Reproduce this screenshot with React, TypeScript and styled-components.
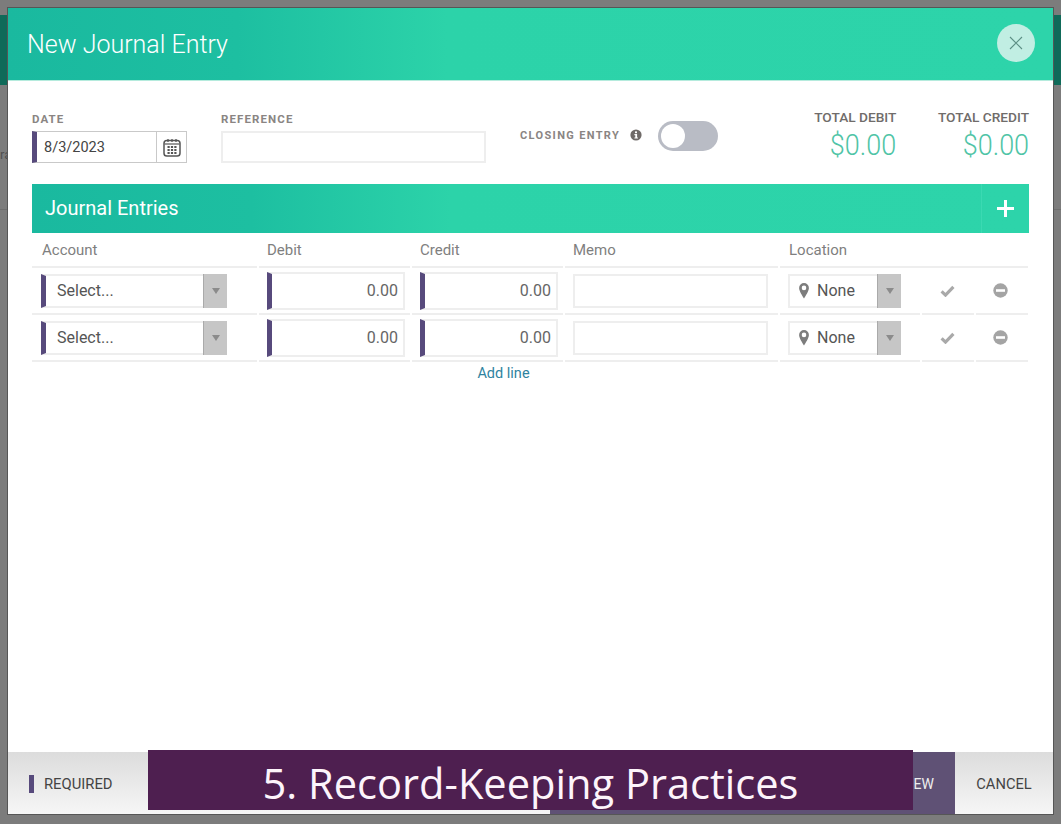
import React from "react";
import styled, { createGlobalStyle } from "styled-components";

const Global = createGlobalStyle`
  html, body { margin: 0; padding: 0; }
  body { width: 1061px; height: 824px; overflow: hidden; background: #7c7c7c; font-family: Roboto, "Liberation Sans", sans-serif; }
  * { box-sizing: border-box; }
`;

const Page = styled.div`
  position: relative;
  width: 1061px;
  height: 824px;
  background: #7c7c7c;
  overflow: hidden;
`;
const BehindBar = styled.div`
  height: 70px;
  margin-top: 15px;
  background: #0f6a59;
`;
const BehindRow = styled.div`
  margin-top: 60px;
  height: 65px;
  padding-top: 2px;
  border-bottom: 1px solid #6e6e6e;
  font-size: 13px;
  line-height: 16px;
  color: #4f4f4f;
`;
const Modal = styled.div`
  position: absolute;
  left: 7px;
  top: 7px;
  width: 1047px;
  height: 808px;
  display: flex;
  flex-direction: column;
  background: #fff;
  border: 1px solid #565656;
`;
const ModalHeader = styled.header`
  flex: none;
  height: 73px;
  display: flex;
  align-items: center;
  justify-content: space-between;
  padding: 0 18px 2px 19px;
  background: linear-gradient(90deg, #1ab99f 0%, #1dbfa1 22%, #2cd3a9 42%, #2dd4aa 100%);
  border-bottom: 1px solid #b5ebdd;
`;
const Title = styled.h1`
  margin: 2px 0 0;
  font-size: 25px;
  font-weight: 300;
  color: #fff;
`;
const CloseButton = styled.button`
  width: 38px;
  height: 38px;
  padding: 0;
  border: 0;
  border-radius: 50%;
  background: #c1eee3;
  display: flex;
  align-items: center;
  justify-content: center;
`;
const Body = styled.main`
  flex: 1;
  padding: 28px 24px 0;
`;
const TopRow = styled.div`
  display: flex;
  align-items: flex-start;
  height: 75px;
`;
const Field = styled.div<{ $w: number }>`
  width: ${(p) => p.$w}px;
  flex: none;
`;
const Label = styled.div`
  font-size: 11.5px;
  line-height: 16px;
  height: 16px;
  font-weight: 700;
  letter-spacing: 1.1px;
  color: #8a8583;
  margin-top: 2px;
`;
const DateBox = styled.div`
  display: flex;
  height: 32px;
  width: 155px;
  margin-top: 4px;
  border: 1px solid #c9c9c9;
  border-left: 5px solid #574a7c;
`;
const DateText = styled.div`
  flex: 1;
  padding-left: 7px;
  font-size: 14.5px;
  line-height: 31px;
  color: #444;
`;
const CalendarCell = styled.div`
  flex: none;
  width: 30px;
  border-left: 1px solid #c9c9c9;
  display: flex;
  align-items: center;
  justify-content: center;
`;
const RefBox = styled.div`
  width: 265px;
  height: 32px;
  margin-top: 4px;
  border: 2px solid #eee;
`;
const Closing = styled.div`
  margin-left: 34px;
  margin-top: 12px;
  display: flex;
  align-items: center;
`;
const ClosingLabel = styled.span`
  margin-bottom: 2px;
  font-size: 11px;
  font-weight: 700;
  letter-spacing: 1.35px;
  color: #8a8583;
`;
const InfoIcon = styled.span`
  margin-left: 10px;
  margin-bottom: 2px;
  display: flex;
`;
const Toggle = styled.div`
  margin-left: 16px;
  width: 60px;
  height: 30px;
  border-radius: 15px;
  background: #b9bcc5;
  padding: 3px;
`;
const Knob = styled.div`
  width: 24px;
  height: 24px;
  border-radius: 50%;
  background: #fff;
`;
const Totals = styled.div`
  margin-left: auto;
  display: flex;
  gap: 41.5px;
`;
const Total = styled.div`
  text-align: right;
`;
const TotalLabel = styled.div`
  font-size: 13.7px;
  font-weight: 500;
  line-height: 16px;
  color: #706c6a;
  white-space: nowrap;
`;
const TotalValue = styled.div`
  margin-top: 2px;
  font-size: 30px;
  font-weight: 300;
  line-height: 36px;
  color: #4fc4a6;
  transform: scaleX(0.9);
  transform-origin: right center;
`;
const SectionBar = styled.div`
  height: 49px;
  display: flex;
  align-items: center;
  justify-content: space-between;
  padding-left: 13px;
  background: linear-gradient(90deg, #1ab99f 0%, #1dbfa1 22%, #2cd3a9 42%, #2dd4aa 100%);
`;
const SectionTitle = styled.div`
  margin-bottom: 2px;
  font-size: 20px;
  font-weight: 400;
  color: #fff;
`;
const PlusCell = styled.div`
  width: 48px;
  height: 100%;
  padding-right: 1px;
  border-left: 1px solid #3bd9b2;
  display: flex;
  align-items: center;
  justify-content: center;
`;
const Grid = styled.div`
  display: grid;
  grid-template-columns: 225px 151px 151px 213px 140px 52px 52px;
  column-gap: 2px;
  width: 997px;
`;
const HeadCell = styled.div<{ $pad: number }>`
  height: 35px;
  padding-left: ${(p) => p.$pad}px;
  font-size: 15px;
  line-height: 34px;
  color: #7f7f7f;
  border-bottom: 2px solid #eee;
`;
const HeadWide = styled(HeadCell)`
  grid-column: span 3;
`;
const Cell = styled.div<{ $l?: number; $r?: number }>`
  height: 47px;
  display: flex;
  align-items: center;
  padding-left: ${(p) => p.$l ?? 0}px;
  padding-right: ${(p) => p.$r ?? 0}px;
  border-bottom: 2px solid #eee;
`;
const CenterCell = styled(Cell)`
  justify-content: center;
`;
const SelectBox = styled.div<{ $bar?: boolean }>`
  flex: 1;
  height: 34px;
  display: flex;
  align-items: stretch;
  border-top: 2px solid #eee;
  border-bottom: 2px solid #eee;
  border-left: ${(p) => (p.$bar ? "5px solid #574a7c" : "2px solid #eee")};
`;
const SelectText = styled.div<{ $pad: number }>`
  flex: 1;
  padding-left: ${(p) => p.$pad}px;
  display: flex;
  align-items: center;
  gap: 8px;
  font-size: 16px;
  color: #555;
`;
const Arrow = styled.div`
  flex: none;
  width: 24px;
  margin: -2px 0;
  background: #c6c6c6;
  border-left: 1px solid #aaa;
  display: flex;
  align-items: center;
  justify-content: center;
`;
const Triangle = styled.div`
  width: 0;
  height: 0;
  border-left: 4px solid transparent;
  border-right: 4px solid transparent;
  border-top: 6px solid #8b8b8b;
`;
const AmountBox = styled.div`
  flex: 1;
  height: 38px;
  border: 2px solid #eee;
  border-left: 5px solid #574a7c;
  padding-right: 5px;
  font-size: 16px;
  line-height: 34px;
  text-align: right;
  color: #666;
`;
const MemoBox = styled.div`
  flex: 1;
  height: 34px;
  border: 2px solid #eee;
`;
const AddLine = styled.div`
  width: 997px;
  padding-right: 54px;
  text-align: center;
  font-size: 14.5px;
  line-height: 23px;
  color: #2f83a0;
`;
const Footer = styled.footer`
  flex: none;
  height: 62px;
  display: flex;
  align-items: stretch;
  background: linear-gradient(180deg, #dcdcdc 0%, #f6f6f6 100%);
`;
const Required = styled.div`
  display: flex;
  align-items: center;
  padding: 2px 0 0 21px;
  gap: 10px;
  font-size: 14.8px;
  color: #444;
  flex: 1;
`;
const RequiredMark = styled.span`
  width: 5px;
  height: 18px;
  background: #574a7c;
`;
const SaveButton = styled.div`
  flex: none;
  width: 405px;
  background: #5f5175;
  color: #eee;
  font-size: 14px;
  display: flex;
  align-items: center;
  justify-content: flex-end;
  padding: 2px 21px 0 0;
`;
const CancelButton = styled.div`
  flex: none;
  width: 98px;
  padding-top: 2px;
  font-size: 14.7px;
  color: #444;
  display: flex;
  align-items: center;
  justify-content: center;
`;
const Caption = styled.div`
  position: absolute;
  left: 148px;
  top: 750px;
  width: 765px;
  height: 60px;
  background: #4e1f50;
  color: #fdf4fb;
  font-family: "Open Sans", sans-serif;
  font-size: 41.6px;
  font-weight: 400;
  line-height: 66px;
  text-align: center;
  white-space: nowrap;
`;

const Calendar = () => (
  <svg width="18" height="19" viewBox="0 0 18 19" fill="none">
    <rect x="1" y="2.5" width="16" height="15.5" rx="2.8" stroke="#555" strokeWidth="1.5" />
    <path d="M1.5 6h15" stroke="#555" strokeWidth="1.2" />
    <path d="M5 1v3M9 1v3M13 1v3" stroke="#555" strokeWidth="1.3" />
    <g fill="#555">
      {[4.5, 7.9, 11.3].map((x) => [8, 11, 14].map((y) => <rect key={`${x}-${y}`} x={x} y={y} width="2.2" height="2" />))}
    </g>
  </svg>
);
const Info = () => (
  <svg width="12" height="12" viewBox="0 0 12 12">
    <circle cx="6" cy="6" r="5.6" fill="#6f6a68" />
    <rect x="5" y="2.4" width="2" height="1.8" fill="#fff" />
    <path d="M4.4 5h2.7v3.4h.8V9.6H4.4V8.4h.9V6.2h-.9z" fill="#fff" />
  </svg>
);
const Pin = () => (
  <svg width="10" height="16" viewBox="0 0 10 16">
    <path fillRule="evenodd" d="M5 0a4.9 4.9 0 0 1 4.9 4.9C9.9 8 6.6 12.6 5 15.6 3.4 12.6.1 8 .1 4.9A4.9 4.9 0 0 1 5 0zm0 2.6a2.3 2.3 0 1 0 0 4.6 2.3 2.3 0 0 0 0-4.6z" fill="#7d7d7d" />
  </svg>
);
const Check = () => (
  <svg width="15" height="12" viewBox="0 0 15 12">
    <path d="M1.6 6.4l3.9 3.7L13.4 1.9" fill="none" stroke="#a9a9a9" strokeWidth="3.2" />
  </svg>
);
const Minus = () => (
  <svg width="15" height="15" viewBox="0 0 15 15">
    <circle cx="7.5" cy="7.5" r="7.2" fill="#a4a4a4" />
    <rect x="3" y="6.2" width="9" height="2.6" fill="#fff" />
  </svg>
);

const Row = () => (
  <>
    <Cell $l={9} $r={30}>
      <SelectBox $bar>
        <SelectText $pad={11}>Select...</SelectText>
        <Arrow><Triangle /></Arrow>
      </SelectBox>
    </Cell>
    <Cell $l={8} $r={5}><AmountBox>0.00</AmountBox></Cell>
    <Cell $l={8} $r={5}><AmountBox>0.00</AmountBox></Cell>
    <Cell $l={8} $r={10}><MemoBox /></Cell>
    <Cell $l={8} $r={19}>
      <SelectBox>
        <SelectText $pad={9}><Pin />None</SelectText>
        <Arrow><Triangle /></Arrow>
      </SelectBox>
    </Cell>
    <CenterCell $r={2}><Check /></CenterCell>
    <CenterCell $r={4}><Minus /></CenterCell>
  </>
);

export default function App() {
  return (
    <Page>
      <Global />
      <BehindBar />
      <BehindRow>ra</BehindRow>
      <Modal>
        <ModalHeader>
          <Title>New Journal Entry</Title>
          <CloseButton aria-label="Close">
            <svg width="14" height="14" viewBox="0 0 14 14">
              <path d="M1 1l12 12M13 1L1 13" stroke="#5d8f85" strokeWidth="1.1" />
            </svg>
          </CloseButton>
        </ModalHeader>
        <Body>
          <TopRow>
            <Field $w={189}>
              <Label>DATE</Label>
              <DateBox>
                <DateText>8/3/2023</DateText>
                <CalendarCell><Calendar /></CalendarCell>
              </DateBox>
            </Field>
            <Field $w={265}>
              <Label>REFERENCE</Label>
              <RefBox />
            </Field>
            <Closing>
              <ClosingLabel>CLOSING ENTRY</ClosingLabel>
              <InfoIcon><Info /></InfoIcon>
              <Toggle><Knob /></Toggle>
            </Closing>
            <Totals>
              <Total>
                <TotalLabel>TOTAL DEBIT</TotalLabel>
                <TotalValue>$0.00</TotalValue>
              </Total>
              <Total>
                <TotalLabel>TOTAL CREDIT</TotalLabel>
                <TotalValue>$0.00</TotalValue>
              </Total>
            </Totals>
          </TopRow>
          <SectionBar>
            <SectionTitle>Journal Entries</SectionTitle>
            <PlusCell>
              <svg width="17" height="17" viewBox="0 0 17 17">
                <path d="M8.5 0v17M0 8.5h17" stroke="#fff" strokeWidth="3" />
              </svg>
            </PlusCell>
          </SectionBar>
          <Grid>
            <HeadCell $pad={10}>Account</HeadCell>
            <HeadCell $pad={8}>Debit</HeadCell>
            <HeadCell $pad={8}>Credit</HeadCell>
            <HeadCell $pad={8}>Memo</HeadCell>
            <HeadWide $pad={9}>Location</HeadWide>
            <Row />
            <Row />
          </Grid>
          <AddLine>Add line</AddLine>
        </Body>
        <Footer>
          <Required><RequiredMark />REQUIRED</Required>
          <SaveButton>SAVE AND NEW</SaveButton>
          <CancelButton>CANCEL</CancelButton>
        </Footer>
      </Modal>
      <Caption>5. Record-Keeping Practices</Caption>
    </Page>
  );
}
